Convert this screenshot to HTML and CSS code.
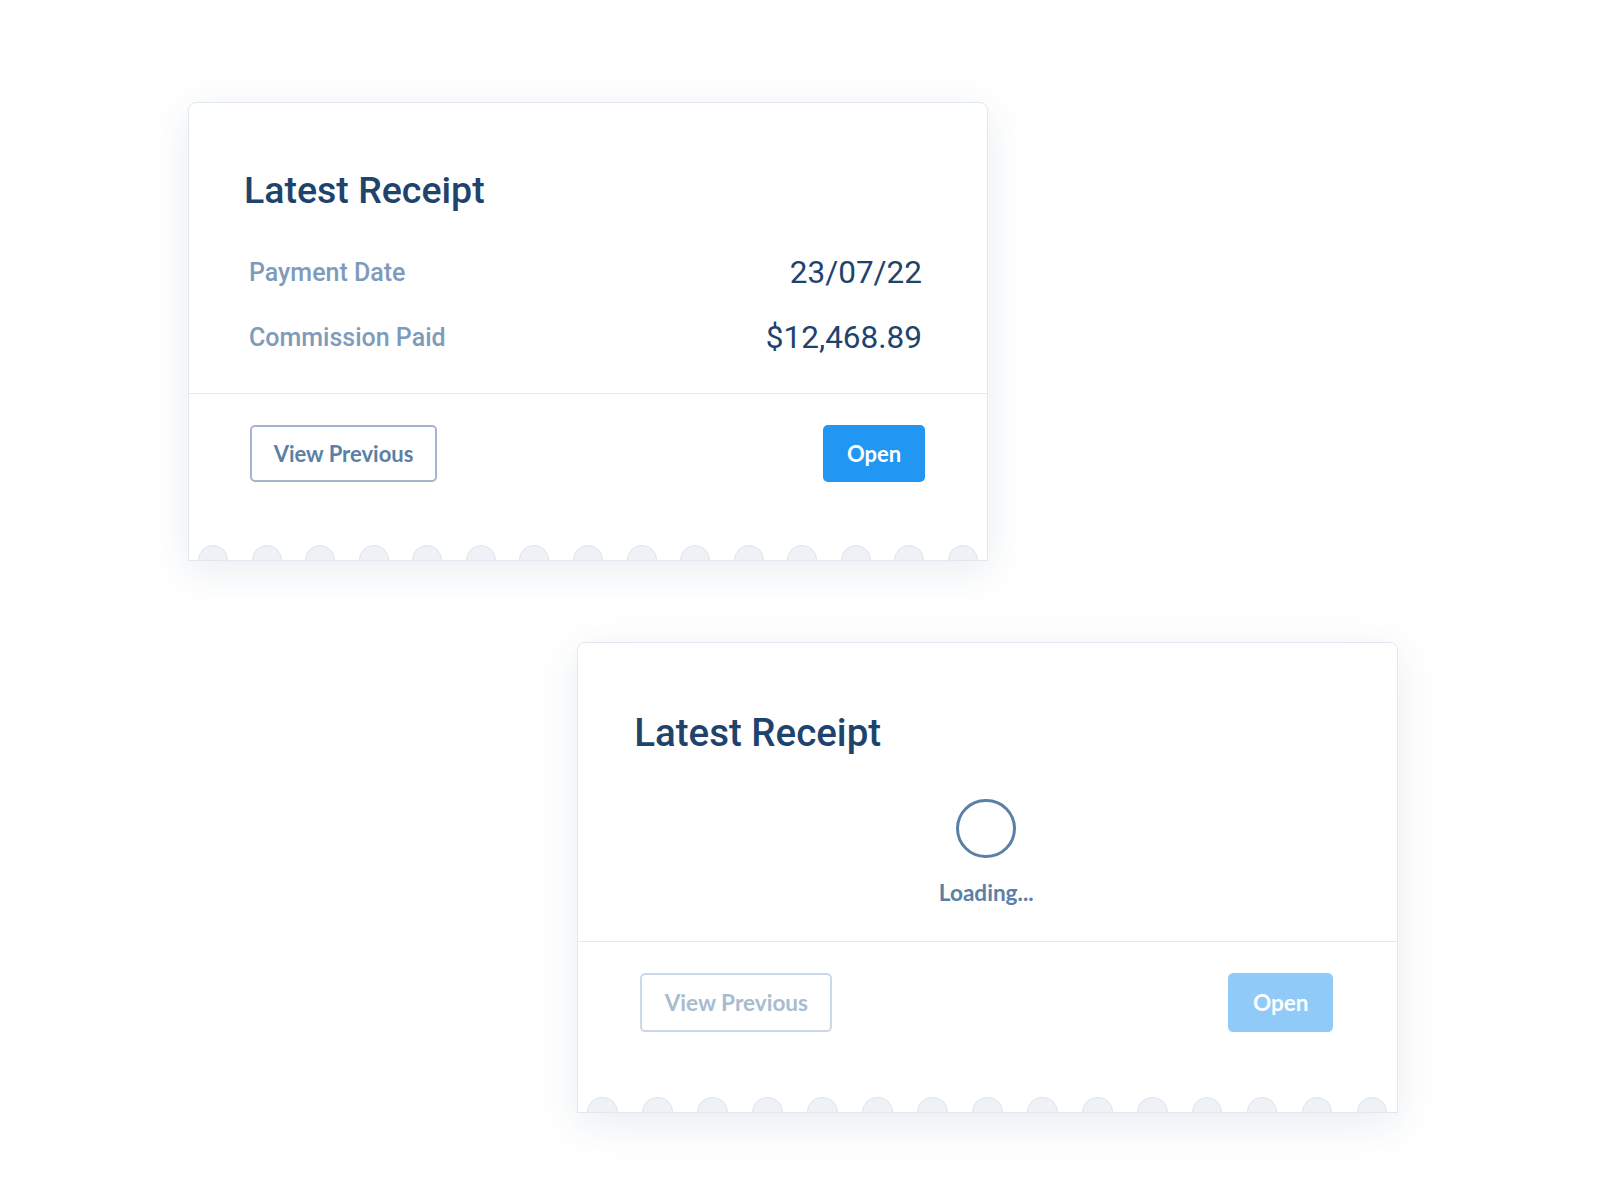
FILE: index.html
```html
<!DOCTYPE html>
<html lang="en">
<head>
    <meta charset="UTF-8">
    <meta name="viewport" content="width=device-width, initial-scale=1.0">
    <title>Latest Receipt</title>
    <link rel="stylesheet" href="styles.css">
</head>
<body>
    <div class="board">
        <!-- Loaded state -->
        <section class="receipt">
            <div class="receipt-body">
                <h2 class="receipt-title">Latest Receipt</h2>
                <div class="receipt-rows">
                    <div class="receipt-row">
                        <span class="row-label">Payment Date</span>
                        <span class="row-value">23/07/22</span>
                    </div>
                    <div class="receipt-row">
                        <span class="row-label">Commission Paid</span>
                        <span class="row-value">$12,468.89</span>
                    </div>
                </div>
            </div>
            <div class="receipt-footer">
                <button class="btn btn-outline">View Previous</button>
                <button class="btn btn-primary">Open</button>
            </div>
            <div class="scallops">
                <span></span><span></span><span></span><span></span><span></span>
                <span></span><span></span><span></span><span></span><span></span>
                <span></span><span></span><span></span><span></span><span></span>
            </div>
        </section>

        <!-- Loading state -->
        <section class="receipt receipt-loading">
            <div class="receipt-body">
                <h2 class="receipt-title">Latest Receipt</h2>
                <div class="loader">
                    <div class="spinner"></div>
                    <p class="loader-text">Loading...</p>
                </div>
            </div>
            <div class="receipt-footer">
                <button class="btn btn-outline" disabled>View Previous</button>
                <button class="btn btn-primary" disabled>Open</button>
            </div>
            <div class="scallops">
                <span></span><span></span><span></span><span></span><span></span>
                <span></span><span></span><span></span><span></span><span></span>
                <span></span><span></span><span></span><span></span><span></span>
            </div>
        </section>
    </div>
</body>
</html>
```

FILE: styles.css
```css
body {
    margin: 0;
    background-color: #ffffff;
    font-family: Roboto, "Liberation Sans", sans-serif;
}
.board {
    padding: 102px 0 80px 188px;
}
.receipt {
    box-sizing: border-box;
    display: flex;
    flex-direction: column;
    width: 800px;
    height: 459px;
    background-color: #ffffff;
    border: 1px solid #e2e8f0;
    border-radius: 8px 8px 0 0;
    box-shadow: 0 10px 40px rgba(40, 70, 110, 0.1);
}
.receipt-loading {
    zoom: 1.026;
    margin: 79px 0 0 379px;
}
.receipt-body {
    box-sizing: border-box;
    height: 291px;
    padding: 64px 65px 0 60px;
    border-bottom: 1px solid #e4e9f0;
}
.receipt-title {
    margin: 0 0 40px -5px;
    font-size: 37.5px;
    line-height: 46px;
    font-weight: 500;
    color: #1e436d;
}
.receipt-rows {
    display: flex;
    flex-direction: column;
    gap: 25px;
}
.receipt-row {
    display: flex;
    justify-content: space-between;
    align-items: center;
    line-height: 40px;
}
.row-label {
    font-size: 25px;
    font-weight: 500;
    color: #7f9bbb;
}
.row-value {
    font-size: 31.5px;
    color: #1e436d;
}
.loader {
    display: flex;
    flex-direction: column;
    align-items: center;
    margin: 42px 0 0 3px;
}
.spinner {
    box-sizing: border-box;
    width: 58px;
    height: 58px;
    border: 3px solid #5b80a5;
    border-radius: 50%;
}
.loader-text {
    margin: 21px 0 0;
    font-family: Lato, "Open Sans", sans-serif;
    font-size: 22px;
    line-height: 26px;
    font-weight: 700;
    color: #5b80a5;
}
.receipt-footer {
    flex: 1;
    display: flex;
    justify-content: space-between;
    align-items: flex-start;
    padding: 31px 62px 0 61px;
}
.btn {
    box-sizing: border-box;
    height: 57px;
    font-family: Lato, "Open Sans", sans-serif;
    font-size: 22px;
    font-weight: 700;
    border-radius: 5px;
    cursor: pointer;
}
.btn-outline {
    width: 187px;
    background-color: #ffffff;
    border: 2px solid #a3b6cc;
    color: #5b80a5;
}
.btn-primary {
    width: 102px;
    background-color: #2196f3;
    border: none;
    color: #ffffff;
}
.btn-outline:disabled {
    border-color: #cbd7e4;
    color: #a8bcd0;
    cursor: default;
}
.btn-primary:disabled {
    background-color: #90caf9;
    cursor: default;
}
/* perforated bottom edge */
.scallops {
    display: flex;
    justify-content: space-between;
    height: 15px;
    padding: 0 9px;
    overflow: hidden;
}
.scallops span {
    box-sizing: border-box;
    flex-shrink: 0;
    width: 30px;
    height: 30px;
    background-color: #eef2f7;
    border: 1px solid #dbe3ec;
    border-radius: 50%;
}
```
